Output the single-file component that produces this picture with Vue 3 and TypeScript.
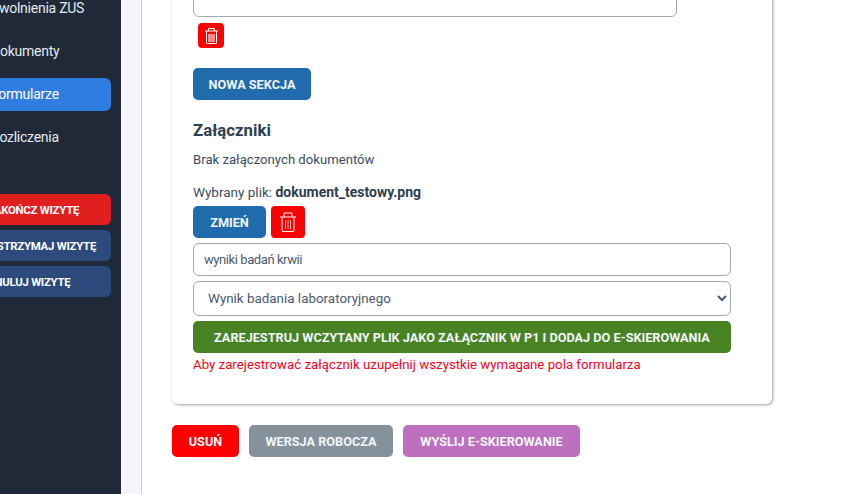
<script setup lang="ts">
const navItems: { label: string; active?: boolean }[] = [
  { label: 'Zwolnienia ZUS' },
  { label: 'Dokumenty' },
  { label: 'Formularze', active: true },
  { label: 'Rozliczenia' },
]
const visitActions = [
  { label: 'ZAKOŃCZ WIZYTĘ', cls: 'end' },
  { label: 'WSTRZYMAJ WIZYTĘ', cls: 'muted' },
  { label: 'ANULUJ WIZYTĘ', cls: 'muted' },
]
</script>

<template>
  <div class="page">
    <aside class="sidebar">
      <div class="side-inner">
        <nav class="nav">
          <a v-for="n in navItems" :key="n.label" class="nav-item" :class="{ active: n.active }">{{ n.label }}</a>
        </nav>
        <div class="actions">
          <button v-for="a in visitActions" :key="a.label" class="action" :class="a.cls">{{ a.label }}</button>
        </div>
      </div>
    </aside>
    <div class="gutter"></div>
    <main class="main">
      <div class="scrolled">
        <section class="card">
          <textarea class="area"></textarea>
          <button class="trash small" aria-label="Usuń">
            <svg viewBox="0 0 13 16" width="13" height="16" fill="none" stroke="#fff" stroke-width="1">
              <path d="M0 3h13M3.5 3V.5h6V3" />
              <path d="M1.5 3v12a.5.5 0 0 0 .5.5h9a.5.5 0 0 0 .5-.5V3" />
              <rect x="3" y="6" width="7" height="8" fill="#ff8a8a" stroke="none" />
            </svg>
          </button>
          <button class="btn blue new-section">NOWA SEKCJA</button>
          <h3 class="heading">Załączniki</h3>
          <p class="none">Brak załączonych dokumentów</p>
          <p class="file">Wybrany plik: <b>dokument_testowy.png</b></p>
          <div class="file-actions">
            <button class="btn blue change">ZMIEŃ</button>
            <button class="trash big" aria-label="Usuń plik">
              <svg viewBox="0 0 16 20" width="16" height="20" fill="none" stroke="#fff" stroke-width="1">
                <path d="M0 5h16M4 5V1h8v4" />
                <path d="M2 5v13.5a1 1 0 0 0 1 1h10a1 1 0 0 0 1-1V5" />
                <path d="M5.5 8v9M8 8v9M10.5 8v9" stroke-opacity=".7" />
              </svg>
            </button>
          </div>
          <input class="field" value="wyniki badań krwii" />
          <select class="field select">
            <option>Wynik badania laboratoryjnego</option>
          </select>
          <button class="btn green register">ZAREJESTRUJ WCZYTANY PLIK JAKO ZAŁĄCZNIK W P1 I DODAJ DO E-SKIEROWANIA</button>
          <p class="error">Aby zarejestrować załącznik uzupełnij wszystkie wymagane pola formularza</p>
        </section>
        <div class="footer">
          <button class="btn red">USUŃ</button>
          <button class="btn grey">WERSJA ROBOCZA</button>
          <button class="btn purple">WYŚLIJ E-SKIEROWANIE</button>
        </div>
      </div>
    </main>
  </div>
</template>

<style>
body { margin: 0; overflow: hidden; }
</style>

<style scoped>
.page {
  display: flex;
  height: 494px;
  width: 854px;
  overflow: hidden;
  font-family: Roboto, "Noto Sans", sans-serif;
  font-size: 13.15px;
  color: #3a4d63;
  background: #fff;
}
.sidebar {
  width: 121px;
  flex: none;
  background: #1f2937;
  overflow: hidden;
}
.side-inner {
  width: 156px;
  margin-left: -45px;
  margin-top: -8px;
}
.nav { display: flex; flex-direction: column; gap: 10px; }
.nav-item {
  height: 33px;
  line-height: 33px;
  padding-left: 36px;
  border-radius: 6px;
  color: #e5e9ef;
  font-size: 14px;
  letter-spacing: -0.25px;
}
.nav-item.active { background: #2f7de1; color: #fff; }
.actions { display: flex; flex-direction: column; gap: 5px; margin-top: 40px; }
.action {
  height: 31px;
  border: 0;
  border-radius: 6px;
  color: #fff;
  font: 700 11.4px Roboto, sans-serif;
  letter-spacing: -0.25px;
  padding: 0 0 0 32px;
  text-align: left;
}
.action.end { background: #e21f1f; }
.action.muted { background: #2d4a7d; }
.gutter {
  width: 20px;
  flex: none;
  background: #f4f6fb;
  border-right: 1px solid #c9ccd3;
}
.main { flex: 1; min-width: 0; padding-left: 30px; }
.scrolled { margin-top: -59px; width: 600px; }
.card {
  background: #fff;
  border-radius: 6px;
  box-shadow: 1px 1px 3px rgba(0, 0, 0, 0.38);
  padding: 21px 41px 30px 21px;
  box-sizing: border-box;
  display: flex;
  flex-direction: column;
  align-items: flex-start;
}
.area {
  display: block;
  width: 484px;
  height: 55px;
  box-sizing: border-box;
  border: 1px solid #a3a8b2;
  border-radius: 6px;
  resize: none;
  outline: 0;
}
.trash {
  display: flex;
  align-items: center;
  justify-content: center;
  padding: 0;
  border: 0;
  background: #ff0000;
  border-radius: 4px;
}
.trash.small { width: 26px; height: 25px; margin: 6px 0 0 5px; }
.trash.big { width: 34px; height: 32px; }
.btn {
  height: 32px;
  border: 0;
  border-radius: 5px;
  color: #f2f5f9;
  font: 700 12.7px Roboto, sans-serif;
  padding: 0 16px;
}
.blue { background: #206bab; }
.new-section { margin-top: 20px; width: 118px; padding: 0; }
.heading { margin: 19px 0 0; font-size: 16.8px; line-height: 22px; font-weight: 700; color: #2c3e50; }
.none { margin: 10px 0 0; line-height: 18px; }
.file { margin: 14px 0 0; line-height: 18px; font-size: 13.5px; }
.file b { color: #2c3e50; font-size: 14px; }
.file-actions { display: flex; gap: 5px; margin-top: 5px; }
.change { width: 73px; padding: 0; }
.field {
  width: 538px;
  box-sizing: border-box;
  border: 1px solid #a3a8b2;
  border-radius: 6px;
  background: #fff;
  color: #4a5a70;
  font-family: Roboto, sans-serif;
  outline: 0;
}
input.field { height: 33px; margin-top: 5px; padding: 0 10px; font-size: 13px; letter-spacing: -0.42px; }
select.field { height: 35px; margin-top: 5px; padding: 0 10px; font-size: 13.4px; }
.green { background: #478323; width: 538px; margin-top: 5px; padding: 0; }
.error { margin: 3px 0 0; color: #ff0022; line-height: 18px; font-size: 13.25px; }
.footer { display: flex; gap: 10px; margin-top: 21px; }
.red { background: #ff0000; width: 67px; padding: 0; }
.grey { background: #85919b; width: 144px; padding: 0; }
.purple { background: #bd70bf; width: 177px; padding: 0; }
</style>
